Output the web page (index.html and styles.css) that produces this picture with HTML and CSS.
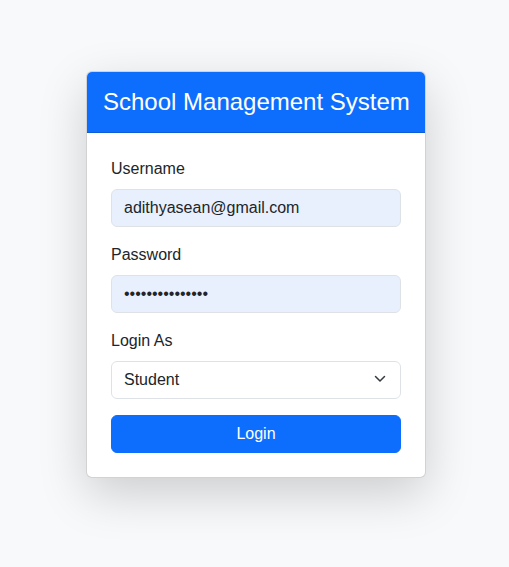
FILE: index.html
```html
<!DOCTYPE html>
<html>
<head>
<meta charset="utf-8">
<link rel="stylesheet" href="styles.css">
</head>
<body>
<div class="page">
  <div class="card">
    <div class="card-header"><h4 class="title">School Management System</h4></div>
    <form class="card-body">
      <div class="field">
        <label class="label">Username</label>
        <input class="control filled" type="text" value="adithyasean@gmail.com">
      </div>
      <div class="field">
        <label class="label">Password</label>
        <input class="control filled" type="password" value="adithyasean1234">
      </div>
      <div class="field">
        <label class="label">Login As</label>
        <div class="select-wrap">
          <select class="control select">
            <option>Student</option>
            <option>Teacher</option>
            <option>Admin</option>
          </select>
          <svg class="chevron" width="12" height="8" viewBox="0 0 12 8"><path d="M1.5 1.5L6 6l4.5-4.5" fill="none" stroke="#343a40" stroke-width="1.5" stroke-linecap="round" stroke-linejoin="round"/></svg>
        </div>
      </div>
      <button type="button" class="btn">Login</button>
    </form>
  </div>
</div>
</body>
</html>
```

FILE: styles.css
```css
* { box-sizing: border-box; }
html, body { margin: 0; padding: 0; min-height: 100%; }
html { height: 100%; background: #f8f9fa; }
body {
  background: #f8f9fa;
  font-family: "Liberation Sans", Arial, sans-serif;
  font-size: 16px;
  line-height: 24px;
  color: #212529;
}
.page {
  padding: 71px 0 0 86px;
}
.card {
  width: 340px;
  background: #fff;
  border: 1px solid rgba(0,0,0,0.175);
  border-radius: 6px;
  box-shadow: 0 16px 48px rgba(0,0,0,0.175);
  overflow: hidden;
}
.card-header {
  background: #0d6efd;
  color: #fff;
  padding: 16px 16px 16px;
  border-bottom: 1px solid #0b5ed7;
}
.title {
  margin: 0;
  font-size: 24px;
  font-weight: 400;
  line-height: 28px;
  white-space: nowrap;
}
.card-body {
  padding: 24px;
  margin: 0;
}
.field { margin-bottom: 16px; }
.label {
  display: block;
  margin-bottom: 8px;
  line-height: 24px;
}
.control {
  display: block;
  width: 100%;
  height: 38px;
  padding: 6px 12px;
  font-family: inherit;
  font-size: 16px;
  line-height: 24px;
  color: #212529;
  background: #fff;
  border: 1px solid #dee2e6;
  border-radius: 6px;
  outline: none;
}
.filled { background: #e8f0fe; }
.select-wrap { position: relative; }
.select {
  appearance: none;
  -webkit-appearance: none;
  padding-right: 36px;
}
.chevron {
  position: absolute;
  right: 15px;
  top: 14px;
  pointer-events: none;
}
.btn {
  display: block;
  width: 100%;
  height: 38px;
  padding: 6px 12px;
  font-family: inherit;
  font-size: 16px;
  line-height: 24px;
  color: #fff;
  background: #0d6efd;
  border: 1px solid #0d6efd;
  border-radius: 6px;
}
```
